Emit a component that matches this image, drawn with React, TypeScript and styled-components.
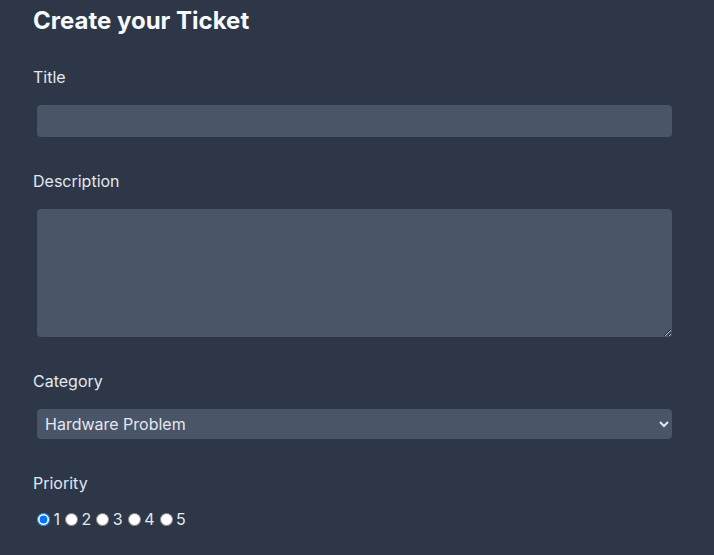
import React from "react";
import styled, { createGlobalStyle } from "styled-components";

const Global = createGlobalStyle`
  html, body { margin: 0; padding: 0; background: #2d3748; }
  body { font-family: Inter, "Noto Sans", sans-serif; color: #e2e8f0; }
`;

const Page = styled.div`
  padding: 0 38px 0 33px;
  min-height: 555px;
  box-sizing: border-box;
`;

const Heading = styled.h1`
  margin: 0;
  padding-top: 3px;
  font-size: 24px;
  line-height: 36px;
  font-weight: 700;
  color: #f7fafc;
`;

const Form = styled.form`
  display: flex;
  flex-direction: column;
`;

const Field = styled.div<{ $top: number }>`
  display: flex;
  flex-direction: column;
  margin-top: ${(p) => p.$top}px;
`;

const Label = styled.label`
  font-size: 16px;
  line-height: 24px;
  color: #e2e8f0;
`;

const TextInput = styled.input`
  margin: 16px 4px 0 4px;
  height: 32px;
  border: none;
  border-radius: 4px;
  background: #4a5568;
  color: #e2e8f0;
  font: inherit;
  padding: 0 8px;
  outline: none;
`;

const TextArea = styled.textarea`
  margin: 16px 4px 0 4px;
  height: 128px;
  border: none;
  border-radius: 4px;
  background: #4a5568;
  color: #e2e8f0;
  font: inherit;
  padding: 8px;
  box-sizing: border-box;
  outline: none;
  display: block;
`;

const Select = styled.select`
  margin: 16px 4px 0 4px;
  height: 30px;
  border: none;
  border-radius: 4px;
  background: #4a5568;
  color: #e2e8f0;
  font-family: inherit;
  font-size: 16px;
  padding: 0 4px;
  outline: none;
  color-scheme: dark;
`;

const RadioRow = styled.div`
  margin-top: 12px;
  display: flex;
  align-items: center;
  font-size: 16px;
  line-height: 24px;
  color: #e2e8f0;
`;

const Radio = styled.input`
  margin: 0 3px 0 5px;
  width: 13px;
  height: 13px;
  &:first-child {
    margin-left: 4px;
  }
`;

const RadioText = styled.span`
  padding-left: 0.5px;
`;

export default function App() {
  return (
    <>
      <Global />
      <Page>
        <Heading>Create your Ticket</Heading>
        <Form>
          <Field $top={26}>
            <Label>Title</Label>
            <TextInput type="text" />
          </Field>
          <Field $top={32}>
            <Label>Description</Label>
            <TextArea />
          </Field>
          <Field $top={32}>
            <Label>Category</Label>
            <Select defaultValue="hw">
              <option value="hw">Hardware Problem</option>
              <option value="sw">Software Problem</option>
            </Select>
          </Field>
          <Field $top={32}>
            <Label>Priority</Label>
            <RadioRow>
              <Radio type="radio" name="p" defaultChecked />
              <RadioText>1</RadioText>
              <Radio type="radio" name="p" />
              <RadioText>2</RadioText>
              <Radio type="radio" name="p" />
              <RadioText>3</RadioText>
              <Radio type="radio" name="p" />
              <RadioText>4</RadioText>
              <Radio type="radio" name="p" />
              <RadioText>5</RadioText>
            </RadioRow>
          </Field>
        </Form>
      </Page>
    </>
  );
}
